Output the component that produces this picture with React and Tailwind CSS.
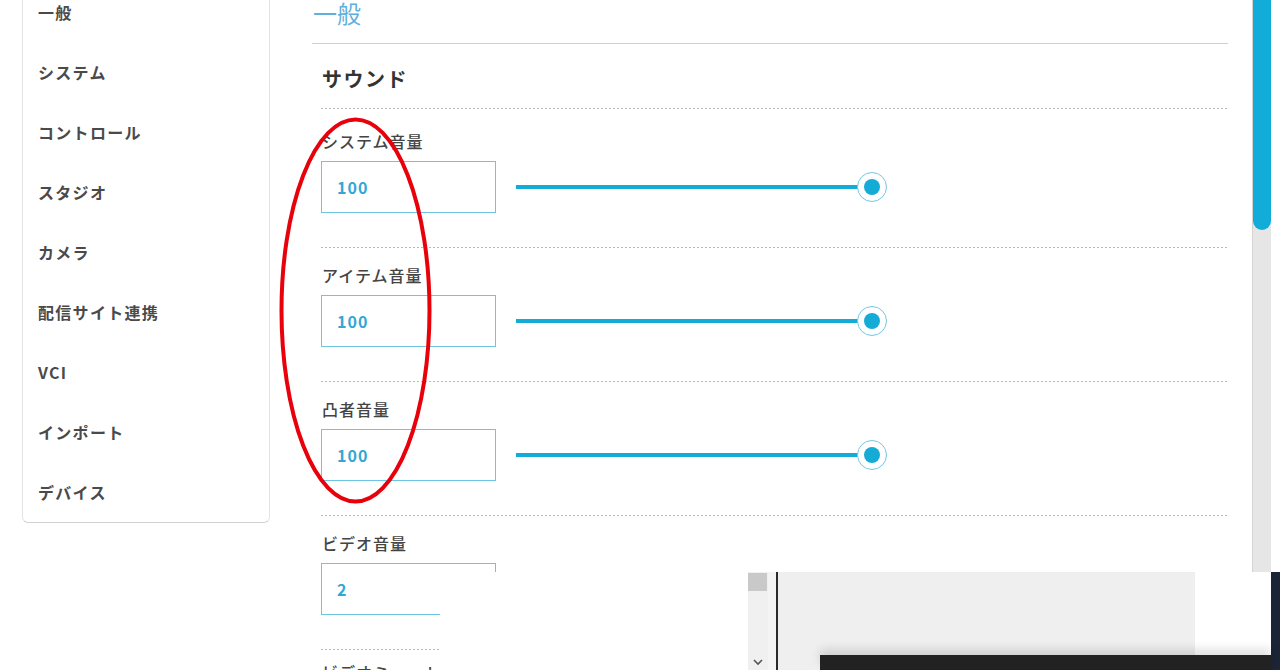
import React from "react";

const navItems = [
  "一般",
  "システム",
  "コントロール",
  "スタジオ",
  "カメラ",
  "配信サイト連携",
  "VCI",
  "インポート",
  "デバイス",
];

const volumes = [
  { label: "システム音量", value: "100", first: true },
  { label: "アイテム音量", value: "100" },
  { label: "凸者音量", value: "100" },
  { label: "ビデオ音量", value: "2" },
];

function Dotted() {
  return (
    <div className="h-px w-full bg-[linear-gradient(to_right,#b8b8b8_50%,transparent_50%)] bg-[length:4px_1px] bg-repeat-x" />
  );
}

function Slider() {
  return (
    <div className="relative ml-[20px] h-[30px] w-[372px] flex items-center">
      <div className="h-[4px] w-[356px] bg-[#14acd6]" />
      <div className="absolute left-[341px] top-[0px] flex h-[30px] w-[30px] items-center justify-center rounded-full border-[1.5px] border-[#74c6e4] bg-white">
        <div className="h-[16px] w-[16px] rounded-full bg-[#14acd6]" />
      </div>
    </div>
  );
}

function VolumeRow({ label, value, first }) {
  return (
    <div>
      <div className={first ? "pt-[22px] pb-[34px]" : "pt-[17px] pb-[34px]"}>
        <div className="pl-[1px] text-[16px] leading-[20px] font-medium tracking-[1px] text-[#444]">
          {label}
        </div>
        <div className="mt-[10px] flex items-center">
          <div className="flex h-[52px] w-[175px] items-center border border-[#6cc5e2] pl-[15px] text-[16px] font-bold tracking-[1px] text-[#32a7d3]">
            {value}
          </div>
          <Slider />
        </div>
      </div>
      <Dotted />
    </div>
  );
}

export default function App() {
  return (
    <div className="relative h-[670px] w-[1280px] overflow-hidden bg-white font-['Noto_Sans_CJK_JP','Noto_Sans',sans-serif]">
      <div className="flex">
        {/* Sidebar */}
        <div className="w-[270px] shrink-0 pl-[22px]">
          <div className="-mt-[18px] w-[248px] rounded-b-[6px] border border-t-0 border-[#e3e3e3] border-b-[#d2d2d2] bg-white">
            {navItems.map((item) => (
              <div
                key={item}
                className="flex h-[60px] items-center pl-[15px] text-[16px] font-bold tracking-[1.3px] text-[#4a4a4a]"
              >
                {item}
              </div>
            ))}
          </div>
        </div>

        {/* Main */}
        <div className="ml-[42px] w-[916px] shrink-0">
          <div className="h-[43px] pl-[1px] text-[24px] leading-[26px] text-[#5fb0dc]">
            一般
          </div>
          <div className="h-px w-full bg-[#cfcfcf]" />
          <div className="pl-[9px]">
            <div className="h-[64px] pt-[22px] pl-[1px] text-[20px] leading-[26px] font-bold tracking-[1.5px] text-[#333]">
              サウンド
            </div>
            <Dotted />
            {volumes.map((v) => (
              <VolumeRow key={v.label} {...v} />
            ))}
            <div className="pt-[12px] pl-[1px] text-[16px] leading-[20px] font-medium tracking-[1px] text-[#444]">
              ビデオミュート
            </div>
          </div>
        </div>

        {/* Scrollbar */}
        <div className="ml-[24px] h-[572px] w-[19px] shrink-0 border-l border-[#d4d4d4] bg-[#e6e6e6]">
          <div className="h-[230px] w-full rounded-b-[9px] bg-[#12acd8]" />
        </div>
      </div>

      {/* Overlapping window at the bottom */}
      <div className="absolute left-[440px] top-[572px] flex h-[98px] w-[840px] bg-white">
        <div className="w-[308px] shrink-0 bg-white" />
        <div className="relative w-[20px] shrink-0 bg-[#f0f0f0]">
          <div className="ml-[0px] mt-[1px] h-[18px] w-[19px] bg-[#c9c9c9]" />
          <svg
            className="absolute left-[5px] top-[87px]"
            width="10"
            height="7"
            viewBox="0 0 10 7"
          >
            <polyline
              points="1,1 5,5 9,1"
              fill="none"
              stroke="#555"
              strokeWidth="1.6"
            />
          </svg>
        </div>
        <div className="w-[8px] shrink-0 bg-[#f4f4f4]" />
        <div className="w-[2px] shrink-0 bg-[#2a2a2a]" />
        <div className="w-[417px] shrink-0 bg-[#efefef]" />
        <div className="w-[76px] shrink-0 bg-white" />
        <div className="w-[9px] shrink-0 bg-[#1b2536]" />
        <div className="absolute left-[380px] top-[83px] h-[15px] w-[451px] bg-[#222] shadow-[0_-6px_10px_rgba(0,0,0,0.12)]" />
      </div>

      {/* Red annotation ellipse */}
      <svg
        className="pointer-events-none absolute left-0 top-0"
        width="1280"
        height="670"
      >
        <ellipse
          cx="355.5"
          cy="310.5"
          rx="74"
          ry="191"
          fill="none"
          stroke="#e8000b"
          strokeWidth="4"
        />
      </svg>
    </div>
  );
}
